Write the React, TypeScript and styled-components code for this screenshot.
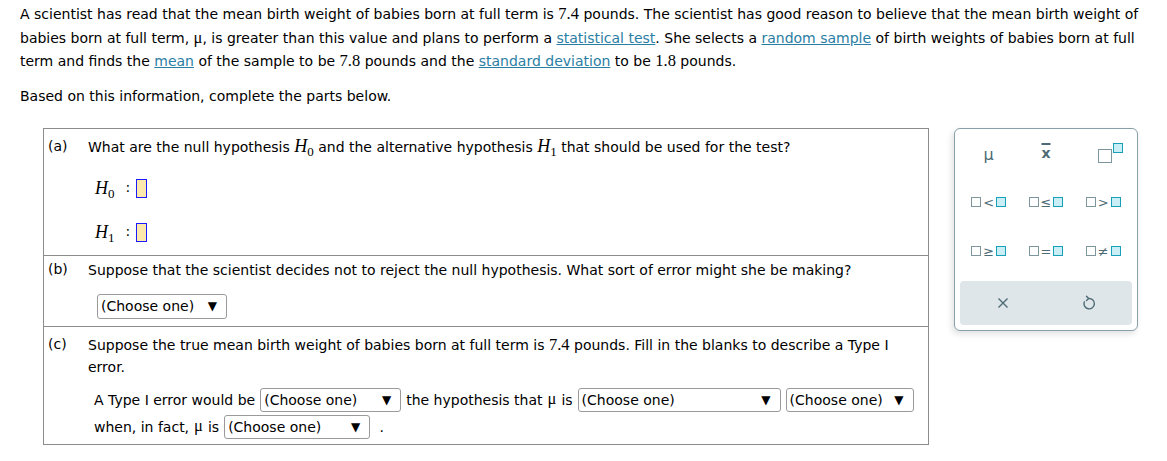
import React from 'react';
import styled, { createGlobalStyle } from 'styled-components';

const GlobalStyle = createGlobalStyle`
  body {
    margin: 0;
    background: #fff;
    color: #000;
    font-family: "DejaVu Sans", Verdana, sans-serif;
    font-size: 14px;
  }
`;

const Page = styled.div`
  width: 1167px;
  padding: 3px 0 0 20px;
  box-sizing: border-box;
`;

const Intro = styled.p<{ gap?: number }>`
  margin: ${(p) => p.gap || 0}px 0 0;
  line-height: 23.5px;
  white-space: nowrap;
`;

const Num = styled.span`
  font-family: "Liberation Serif", "Times New Roman", serif;
  font-size: 16.5px;
  line-height: 1;
`;

const Link = styled.a`
  color: #2a7ea4;
  text-decoration: underline;
  cursor: pointer;
`;

const Work = styled.div`
  display: flex;
  align-items: flex-start;
  gap: 25px;
  margin-top: 19px;
  padding-left: 23px;
`;

const Box = styled.div`
  width: 886px;
  border: 1px solid #8c8c8c;
  box-sizing: border-box;
`;

const Part = styled.div<{ top: number; bottom: number; divided?: boolean }>`
  display: flex;
  padding: ${(p) => p.top}px 0 ${(p) => p.bottom}px;
  border-top: ${(p) => (p.divided ? '1px solid #8c8c8c' : 'none')};
`;

const Label = styled.div`
  width: 40px;
  padding-left: 4px;
  line-height: 20px;
  flex-shrink: 0;
`;

const Content = styled.div<{ lh?: number }>`
  flex: 1;
  line-height: ${(p) => p.lh || 23.5}px;
`;

const MathH = styled.span`
  font-family: "Liberation Serif", "Times New Roman", serif;
  font-style: italic;
  font-size: 18px;
  line-height: 1;
`;

const Sub = styled.sub`
  font-family: "Liberation Serif", "Times New Roman", serif;
  font-style: normal;
  font-size: 13px;
  vertical-align: -4px;
  line-height: 0;
`;

const HList = styled.div`
  display: flex;
  flex-direction: column;
  gap: 20px;
  padding: 17px 0 0 7px;
`;

const HRow = styled.div`
  height: 24px;
  display: flex;
  align-items: center;
`;

const Colon = styled.span`
  margin: 0 6px 0 11px;
`;

const Blank = styled.span`
  width: 9px;
  height: 17px;
  border: 1px solid #1a1aff;
  background: #fde9ad;
`;

const Select = styled.span<{ w: number; h?: number }>`
  display: inline-flex;
  align-items: center;
  justify-content: space-between;
  width: ${(p) => p.w}px;
  height: ${(p) => p.h || 24}px;
  padding: 0 9px 0 3px;
  box-sizing: border-box;
  border: 1px solid #9a9a9a;
  border-radius: 3px;
  background: #fff;
  line-height: 22px;
  white-space: nowrap;
`;

const Arrow = styled.span`
  font-size: 12px;
`;

const BSelect = styled.div`
  margin: 11px 0 0 9px;
  height: 25px;
  display: flex;
`;

const FillRows = styled.div`
  display: flex;
  flex-direction: column;
  gap: 3px;
  margin-top: 10px;
  padding-left: 6px;
`;

const FillRow = styled.div`
  display: flex;
  align-items: center;
  gap: 5px;
  height: 24px;
  white-space: nowrap;
`;

const Panel = styled.div`
  width: 184px;
  border: 1px solid #87a0a9;
  border-radius: 6px;
  padding: 0 5px 5px;
  box-sizing: border-box;
  background: #fff;
  box-shadow: -2px 3px 6px rgba(0, 0, 0, 0.12);
`;

const Keys = styled.div`
  display: grid;
  grid-template-columns: repeat(3, 1fr);
  grid-auto-rows: 49px;
`;

const Key = styled.div`
  display: flex;
  align-items: center;
  justify-content: center;
  color: #4d6b75;
  font-size: 14px;
`;

const Mu = styled.span`
  font-size: 16px;
  margin-top: 2px;
`;

const XBar = styled.span`
  font-weight: bold;
  font-size: 14px;
  text-decoration: overline;
  text-decoration-thickness: 2px;
`;

const Sq = styled.span<{ teal?: boolean; size?: number }>`
  display: inline-block;
  width: ${(p) => p.size || 10}px;
  height: ${(p) => p.size || 10}px;
  box-sizing: border-box;
  border: 1.5px solid ${(p) => (p.teal ? '#17a0b8' : '#7d959d')};
  background: ${(p) => (p.teal ? '#c9eef5' : '#fff')};
`;

const Cmp = styled.span`
  display: inline-flex;
  align-items: center;
  gap: 2px;
  font-size: 13px;
  line-height: 1;
`;

const Power = styled.span`
  display: inline-flex;
  align-items: flex-start;
  gap: 1px;
  margin: 0 0 0 14px;
  & > span:first-child {
    margin-top: 6px;
  }
`;

const Bar = styled.div`
  margin-top: 5px;
  height: 44px;
  display: grid;
  grid-template-columns: 1fr 1fr;
  background: #dfe6e9;
  border-radius: 4px;
`;

function Clear() {
  return (
    <svg width="12" height="12" viewBox="0 0 12 12">
      <path d="M1.5 1.5 L10.5 10.5 M10.5 1.5 L1.5 10.5" stroke="#4d6b75" strokeWidth="1.4" fill="none" />
    </svg>
  );
}

function Undo() {
  return (
    <svg width="14" height="16" viewBox="0 0 14 16">
      <path
        d="M6.5 3.5 A5.2 5.2 0 1 1 2.3 6.8 M4.5 1.2 L6.7 3.5 L4.5 5.6"
        stroke="#4d6b75"
        strokeWidth="1.4"
        fill="none"
        strokeLinecap="round"
        strokeLinejoin="round"
      />
    </svg>
  );
}

const comparisons = ['<', '≤', '>', '≥', '=', '≠'];

function Choose({ w, h }: { w: number; h?: number }) {
  return (
    <Select w={w} h={h}>
      (Choose one) <Arrow>▼</Arrow>
    </Select>
  );
}

export default function App() {
  return (
    <Page>
      <GlobalStyle />
      <Intro>
        A scientist has read that the mean birth weight of babies born at full term is <Num>7.4</Num> pounds. The
        scientist has good reason to believe that the mean birth weight of
        <br />
        babies born at full term, <Num>μ</Num>, is greater than this value and plans to perform a{' '}
        <Link>statistical test</Link>. She selects a <Link>random sample</Link> of birth weights of babies born at full
        <br />
        term and finds the <Link>mean</Link> of the sample to be <Num>7.8</Num> pounds and the{' '}
        <Link>standard deviation</Link> to be <Num>1.8</Num> pounds.
      </Intro>
      <Intro gap={11.5}>Based on this information, complete the parts below.</Intro>
      <Work>
        <Box>
          <Part top={7} bottom={11}>
            <Label>(a)</Label>
            <Content>
              What are the null hypothesis{' '}
              <MathH>
                H<Sub>0</Sub>
              </MathH>{' '}
              and the alternative hypothesis{' '}
              <MathH>
                H<Sub>1</Sub>
              </MathH>{' '}
              that should be used for the test?
              <HList>
                <HRow>
                  <MathH>
                    H<Sub>0</Sub>
                  </MathH>
                  <Colon>:</Colon>
                  <Blank />
                </HRow>
                <HRow>
                  <MathH>
                    H<Sub>1</Sub>
                  </MathH>
                  <Colon>:</Colon>
                  <Blank />
                </HRow>
              </HList>
            </Content>
          </Part>
          <Part top={3} bottom={7} divided>
            <Label>(b)</Label>
            <Content>
              Suppose that the scientist decides not to reject the null hypothesis. What sort of error might she be
              making?
              <BSelect>
                <Choose w={130} h={25} />
              </BSelect>
            </Content>
          </Part>
          <Part top={7} bottom={5} divided>
            <Label>(c)</Label>
            <Content lh={22}>
              Suppose the true mean birth weight of babies born at full term is <Num>7.4</Num> pounds. Fill in the
              blanks to describe a Type I
              <br />
              error.
              <FillRows>
                <FillRow>
                  A Type I error would be
                  <Choose w={141} />
                  the hypothesis that <Num>μ</Num> is
                  <Choose w={203} />
                  <Choose w={128} />
                </FillRow>
                <FillRow>
                  when, in fact, <Num>μ</Num> is
                  <Choose w={146} />
                  <span>&nbsp;.</span>
                </FillRow>
              </FillRows>
            </Content>
          </Part>
        </Box>
        <Panel>
          <Keys>
            <Key>
              <Mu>μ</Mu>
            </Key>
            <Key>
              <XBar>x</XBar>
            </Key>
            <Key>
              <Power>
                <Sq size={14} />
                <Sq teal size={10} />
              </Power>
            </Key>
            {comparisons.map((c) => (
              <Key key={c}>
                <Cmp>
                  <Sq />
                  {c}
                  <Sq teal />
                </Cmp>
              </Key>
            ))}
          </Keys>
          <Bar>
            <Key>
              <Clear />
            </Key>
            <Key>
              <Undo />
            </Key>
          </Bar>
        </Panel>
      </Work>
    </Page>
  );
}
